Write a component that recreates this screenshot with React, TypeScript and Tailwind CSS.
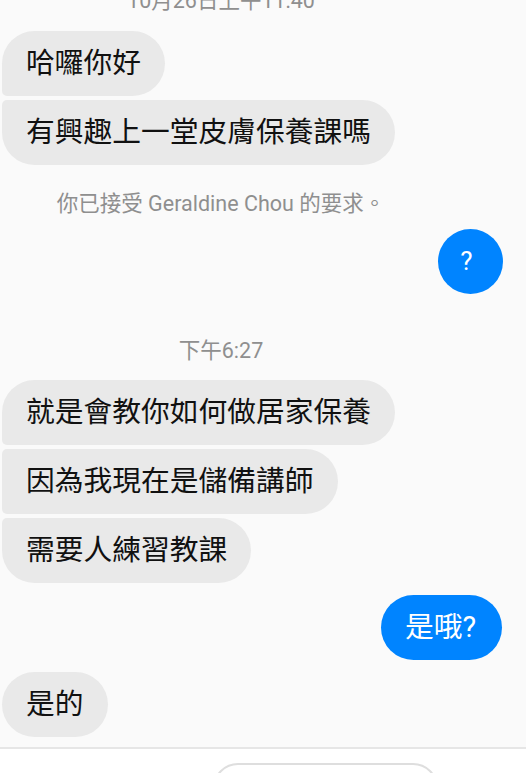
const font = { fontFamily: '"Roboto", "Noto Sans CJK TC", sans-serif' }

type Pos = "single" | "first" | "middle" | "last"

const corner: Record<Pos, string> = {
  single: "rounded-[33px]",
  first: "rounded-[33px] rounded-bl-[5px]",
  middle: "rounded-[33px] rounded-l-[5px]",
  last: "rounded-[33px] rounded-tl-[5px]",
}

function Incoming({ text, pos, className = "" }: { text: string; pos: Pos; className?: string }) {
  return (
    <div className={`flex pl-[2px] ${className}`}>
      <div className={`h-[65px] px-6 flex items-center bg-[#e9e9e9] text-[28.75px] text-[#111] ${corner[pos]}`}>
        {text}
      </div>
    </div>
  )
}

function Stamp({ text, className = "" }: { text: string; className?: string }) {
  return (
    <div className={`h-6 leading-6 w-[442px] text-center text-[21.5px] text-[#8f8f8f] whitespace-nowrap ${className}`}>
      {text}
    </div>
  )
}

export default function App() {
  return (
    <div className="w-[526px] h-[773px] overflow-hidden bg-[#fafafa] flex flex-col" style={font}>
      {/* Messages */}
      <div className="flex flex-col">
        <Stamp text="10月26日上午11:40" className="mt-[-11px]" />
        <Incoming text="哈囉你好" pos="first" className="mt-[18px]" />
        <Incoming text="有興趣上一堂皮膚保養課嗎" pos="last" className="mt-1" />
        <Stamp text="你已接受 Geraldine Chou 的要求。" className="mt-[27px]" />

        <div className="flex justify-end pr-[23px] mt-[13px]">
          <div className="w-[65px] h-[65px] pr-2 rounded-full bg-[#0084ff] text-white text-[26px] flex items-center justify-center">
            ?
          </div>
        </div>

        <Stamp text="下午6:27" className="mt-[45px]" />
        <Incoming text="就是會教你如何做居家保養" pos="first" className="mt-[17px]" />
        <Incoming text="因為我現在是儲備講師" pos="middle" className="mt-1" />
        <Incoming text="需要人練習教課" pos="last" className="mt-1" />

        <div className="flex justify-end pr-[24px] mt-3">
          <div className="h-[65px] pl-6 pr-[26px] rounded-[33px] bg-[#0084ff] text-white text-[28.75px] flex items-center">
            是哦?
          </div>
        </div>

        <Incoming text="是的" pos="single" className="mt-3" />
      </div>

      {/* Composer */}
      <div className="mt-[10px] flex-1 bg-white border-t-2 border-[#e6e6e6]">
        <div className="ml-[213px] mt-[14px] w-[225px] h-[50px] rounded-full border-2 border-[#dedede]" />
      </div>
    </div>
  )
}
